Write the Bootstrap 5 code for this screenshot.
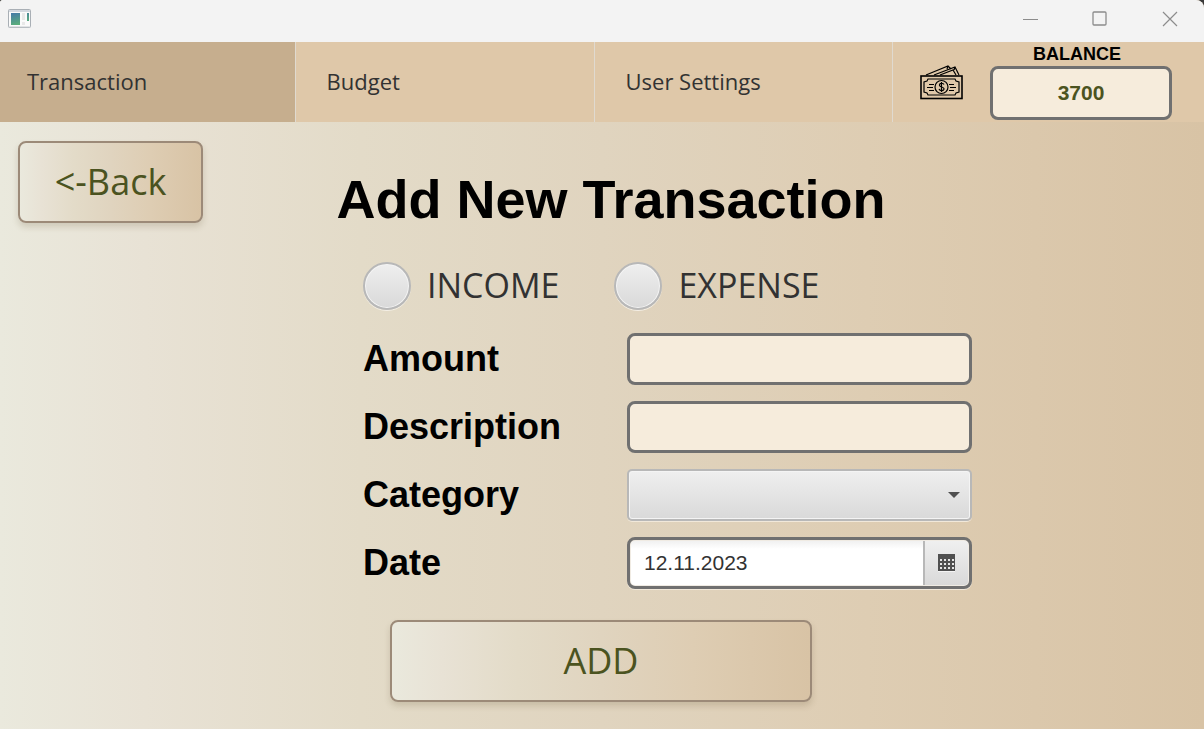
<!DOCTYPE html>
<html lang="en">
<head>
<meta charset="utf-8">
<meta name="viewport" content="width=device-width, initial-scale=1">
<title>Add New Transaction</title>
<link href="https://cdn.jsdelivr.net/npm/bootstrap@5.3.0/dist/css/bootstrap.min.css" rel="stylesheet">
<style>
  :root {
    --ui: "Open Sans", "Noto Sans", sans-serif;
    --arial: "Liberation Sans", Arial, sans-serif;
    --sand: linear-gradient(to right, #eae9dd, #e8e2d5 12%, #e3dbc8 30%, #e0d4bf 50%, #decdb3 72%, #d8c3a5);
  }
  body { background: #3a3a3a; font-family: var(--ui); color: #323232; }
  .app-window { background: var(--sand); border-radius: 3px 8px 0 0; overflow: hidden; }
  .title-bar { height: 42px; background: #f3f3f3; padding: 0 26px 4px 8px; }
  .win-controls { gap: 54px; }
  .win-controls button, .cal-btn { border: 0; padding: 0; background: none; }
  .win-controls svg { display: block; }
  .top-nav { height: 80px; background: #dfc8a9; }
  .top-tab { flex: 0 0 24.83%; padding: 0 0 2px 31px; font-size: 22px; color: #323232; text-decoration: none; border-right: 1px solid #e0dad0; }
  .top-tab.active { flex-basis: 24.55%; padding-left: 27px; background: #c6ae8e; }
  .balance-area { padding-bottom: 2px; }
  .balance-label { font: bold 18px/24px var(--arial); color: #000; padding-right: 8px; }
  .field { height: 52px; border: 3px solid #707070; border-radius: 8px; background: #f6ecdc; }
  .field:focus { background: #f6ecdc; }
  .balance-box { width: 182px; height: 54px; font: bold 21px/24px var(--arial); color: #4b5320; text-align: center; }
  .sand-btn { height: 82px; font-size: 36px; line-height: 40px; color: #4b5320; background: var(--sand); border: 2px solid #9c8a78; border-radius: 8px; box-shadow: 0 4px 6px rgba(90, 70, 40, .18); }
  .back-btn { width: 185px; }
  .add-btn { width: 422px; }
  .head-grid { display: grid; grid-template-columns: 1fr auto 1fr; padding: 19px 0 0 18px; }
  .page-title { font: bold 54px/60px var(--arial); color: #000; margin: 28px 0 0; }
  .entry-form { max-width: 740px; padding: 33px 0 0 131px; }
  .type-row { height: 48px; gap: 55px; margin-bottom: 23px; }
  .type-row label { font-size: 34px; line-height: 46px; }
  .round-radio { width: 48px; height: 48px; margin: 0; border: 2px solid #b8b8b8; background: linear-gradient(#efefef, #d9d9d9); box-shadow: 0 1px 0 #f4efe6, inset 0 0 0 1px #f4f4f4; }
  .form-rows { display: grid; grid-template-columns: 264px minmax(0, 1fr); row-gap: 16px; }
  .form-rows label { font: bold 36px/52px var(--arial); color: #000; }
  .cat-select { height: 52px; border: 2px solid #b8b8b8; border-radius: 5px; box-shadow: 0 1px 0 #f1e8da, inset 0 0 0 1px #f4f4f4;
    background: url("data:image/svg+xml,%3Csvg xmlns='http://www.w3.org/2000/svg' viewBox='0 0 12 6'%3E%3Cpath fill='%23505050' d='M0 0h12L6 6z'/%3E%3C/svg%3E") right 10px center / 12px 6px no-repeat, linear-gradient(#efefef, #d9d9d9); }
  .date-box { padding: 1px; background: #f0ebe3; box-shadow: 0 1px 0 #f1e8da; }
  .date-input { width: 0; min-width: 0; border: 0; border-radius: 4px 0 0 4px; background: linear-gradient(#f1f1f1, #fff 8px); padding: 0 13px; font: 21px/24px var(--arial); color: #323232; }
  .cal-btn { width: 45px; border-left: 2px solid #b8b8b8; border-radius: 0 4px 4px 0; background: linear-gradient(#efefef, #d9d9d9); }
  .form-foot { padding: 31px 2px 27px 0; }
</style>
</head>
<body>
<div class="app-window min-vh-100 d-flex flex-column">
  <header class="title-bar d-flex align-items-center justify-content-between">
    <svg width="24" height="20" viewBox="0 0 24 20" aria-hidden="true">
      <defs><linearGradient id="pane" x1="0" y1="0" x2=".4" y2="1"><stop offset="0" stop-color="#4579a8"/><stop offset="1" stop-color="#5bb079"/></linearGradient></defs>
      <rect x=".5" y=".5" width="22" height="18" rx="1" fill="#fafafa" stroke="#a9afb5"/>
      <path d="M1 2h21" stroke="#d3d8df" stroke-width="2"/>
      <path d="M1 18h21" stroke="#c8ccd0"/>
      <path fill="url(#pane)" d="M3 4h9v12H3zM19 4h2v8h-2z"/>
      <path fill="#e8e8e8" d="M14 4h3v7h-3zM14 13h3v3h-3z"/>
    </svg>
    <div class="win-controls d-flex align-items-center">
      <button type="button" aria-label="Minimize"><svg width="16" height="16" fill="none" stroke="#8c8c8c"><path d="M1 8.500h15"/></svg></button>
      <button type="button" aria-label="Maximize"><svg width="16" height="16" fill="none" stroke="#8c8c8c" stroke-width="1.300"><rect x="1" y="1" width="13" height="13" rx="1"/></svg></button>
      <button type="button" aria-label="Close"><svg width="16" height="16" fill="none" stroke="#8c8c8c" stroke-width="1.200"><path d="M1 1l14 14M15 1L1 15"/></svg></button>
    </div>
  </header>

  <nav class="top-nav d-flex" aria-label="Main">
    <a class="top-tab active d-flex align-items-center" href="#" aria-current="page">Transaction</a>
    <a class="top-tab d-flex align-items-center" href="#">Budget</a>
    <a class="top-tab d-flex align-items-center" href="#">User Settings</a>
    <div class="d-flex flex-fill align-items-center justify-content-end pe-4 me-2">
      <svg class="me-4" width="46" height="36" viewBox="0 0 46 36" fill="none" stroke="#000" aria-hidden="true">
        <g stroke-width="1.200">
          <path d="M6 11L28 2l3 3M14 11L35 3l4 8M20 11l13-5 3 5M28 2l-1 3M35 3l-1 3"/>
          <rect x="1" y="12" width="41" height="22.500" stroke-width="1.600"/>
          <path d="M8 15h27l1 2 3 1v10l-3 1-1 2H8l-1-2-3-1V18l3-1z"/>
          <circle cx="21.500" cy="23" r="6.500"/>
          <path d="M24 20.500c-1-2-5-1.500-4.500.8.500 2 4 1.300 4.500 3.400.3 2.300-4 2.500-5 .3M21.500 18v10"/>
          <path d="M9 20.500h5M7 23.500h6M9 26.500h5M29 20.500h5M30 23.500h6M29 26.500h5"/>
        </g>
      </svg>
      <div class="balance-area d-flex flex-column text-center">
        <label class="balance-label" for="balance">BALANCE</label>
        <input class="field balance-box" id="balance" type="text" value="3700" readonly>
      </div>
    </div>
  </nav>

  <main>
    <div class="head-grid">
      <button type="button" class="sand-btn back-btn">&lt;-Back</button>
      <h1 class="page-title">Add New Transaction</h1>
    </div>
    <form class="entry-form mx-auto" id="entry">
      <div class="type-row d-flex">
        <div class="d-flex gap-3"><input class="form-check-input round-radio" type="radio" name="kind" id="income"><label for="income">INCOME</label></div>
        <div class="d-flex gap-3"><input class="form-check-input round-radio" type="radio" name="kind" id="expense"><label for="expense">EXPENSE</label></div>
      </div>
      <div class="form-rows">
        <label for="amount">Amount</label>
        <input class="form-control field" id="amount" type="text">
        <label for="description">Description</label>
        <input class="form-control field" id="description" type="text">
        <label for="category">Category</label>
        <select class="form-select cat-select" id="category"><option value=""></option></select>
        <label for="date">Date</label>
        <div class="field date-box d-flex">
          <input class="date-input flex-fill" id="date" type="text" value="12.11.2023">
          <button type="button" class="cal-btn d-flex align-items-center justify-content-center" aria-label="Open calendar">
            <svg width="17" height="18" viewBox="0 0 17 18" aria-hidden="true"><path fill="#505050" d="M0 0h17v17H0z"/><path stroke="#f4f4f4" d="M0 17.500h17"/><path stroke="#e6e6e6" stroke-width="2" stroke-dasharray="2 2" d="M2 6h14M2 10h14M2 14h14"/></svg>
          </button>
        </div>
      </div>
    </form>
    <div class="form-foot d-flex justify-content-center"><button type="submit" form="entry" class="sand-btn add-btn">ADD</button></div>
  </main>
</div>
<script src="https://cdn.jsdelivr.net/npm/bootstrap@5.3.0/dist/js/bootstrap.bundle.min.js"></script>
</body>
</html>
